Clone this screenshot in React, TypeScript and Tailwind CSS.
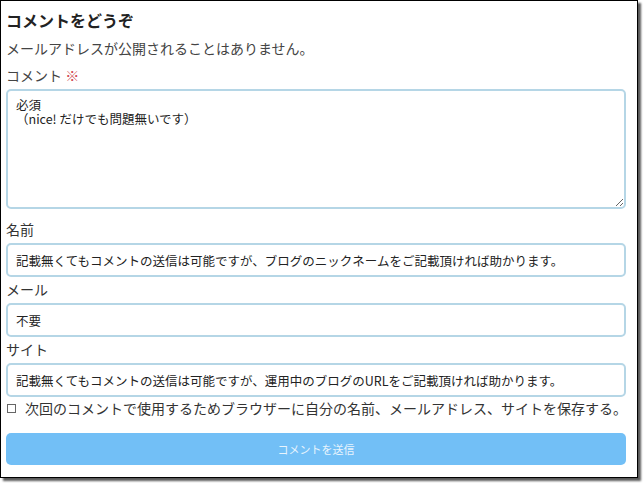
import React from "react";

const jp = { fontFamily: '"Noto Sans CJK JP", "Noto Sans", sans-serif' };

function Field({ label, value, className = "" }: { label: string; value: string; className?: string }) {
  return (
    <>
      <div className={`h-5 text-[14px] leading-5 text-[#333] ${className}`}>{label}</div>
      <input
        readOnly
        value={value}
        className="mt-1 block h-[34px] w-[620px] rounded-[5px] border-2 border-[#b5d6e6] bg-white px-[8px] text-[12.5px] text-[#222] outline-none"
        style={jp}
      />
    </>
  );
}

export default function App() {
  return (
    <div className="h-[483px] w-[644px] bg-white" style={jp}>
      <div className="h-[478px] w-[638px] border border-black bg-white pl-[5px] shadow-[3px_3px_2px_rgba(0,0,0,0.65)]">
        {/* Heading */}
        <h3 className="mt-[7px] h-6 text-[16px] font-bold leading-6 text-[#222]">コメントをどうぞ</h3>
        <p className="mt-[6px] h-5 text-[14px] leading-5 text-[#444]">
          メールアドレスが公開されることはありません。
        </p>
        <div className="mt-[7px] h-5 text-[14px] leading-5 text-[#444]">
          コメント <span className="text-[#d0474f]">※</span>
        </div>
        <textarea
          readOnly
          value={"必須\n（nice! だけでも問題無いです）"}
          className="mt-1 block h-[120px] w-[620px] rounded-[5px] border-2 border-[#b5d6e6] bg-white px-[8px] pt-[7px] text-[12.5px] leading-[14px] text-[#222] outline-none"
          style={jp}
        />

        <Field
          className="mt-[10px]"
          label="名前"
          value="記載無くてもコメントの送信は可能ですが、ブログのニックネームをご記載頂ければ助かります。"
        />
        <Field className="mt-[2px]" label="メール" value="不要" />
        <Field
          className="mt-[2px]"
          label="サイト"
          value="記載無くてもコメントの送信は可能ですが、運用中のブログのURLをご記載頂ければ助かります。"
        />

        {/* Save info */}
        <label className="mt-[1px] flex h-5 items-center text-[14px] leading-5 text-[#333]">
          <span className="ml-[1px] mr-[9px] inline-block h-[9px] w-[9px] border border-[#666] bg-white" />
          次回のコメントで使用するためブラウザーに自分の名前、メールアドレス、サイトを保存する。
        </label>

        <button className="mt-[15px] flex h-[32px] w-[620px] items-center justify-center rounded-[5px] bg-[#72bff6] text-[11px] text-[#e8f4fd]">
          コメントを送信
        </button>
      </div>
    </div>
  );
}
